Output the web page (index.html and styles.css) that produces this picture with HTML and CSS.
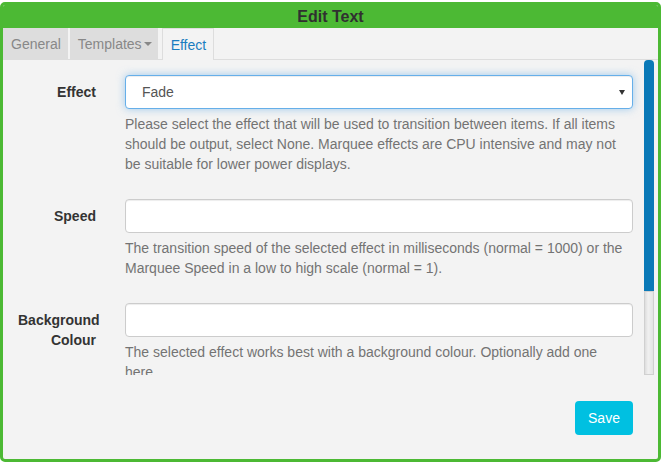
FILE: index.html
```html
<!DOCTYPE html>
<html lang="en">
<head>
    <meta charset="UTF-8">
    <meta name="viewport" content="width=device-width, initial-scale=1.0">
    <title>Edit Text</title>
    <link rel="stylesheet" href="styles.css">
</head>
<body>
    <div class="dialog">
        <div class="dialog-title">Edit Text</div>

        <ul class="tabs">
            <li class="tab">General</li>
            <li class="tab">Templates<span class="caret"></span></li>
            <li class="tab active">Effect</li>
        </ul>

        <div class="dialog-body">
            <div class="form">
                <div class="form-group">
                    <label class="form-label">Effect</label>
                    <div class="form-field">
                        <div class="select-wrap">
                            <select class="form-control focused">
                                <option>Fade</option>
                                <option>None</option>
                                <option>Marquee Left</option>
                            </select>
                        </div>
                        <p class="help-block">Please select the effect that will be used to transition between items. If all items should be output, select None. Marquee effects are CPU intensive and may not be suitable for lower power displays.</p>
                    </div>
                </div>

                <div class="form-group">
                    <label class="form-label">Speed</label>
                    <div class="form-field">
                        <input class="form-control" type="text">
                        <p class="help-block">The transition speed of the selected effect in milliseconds (normal = 1000) or the Marquee Speed in a low to high scale (normal = 1).</p>
                    </div>
                </div>

                <div class="form-group">
                    <label class="form-label">Background Colour</label>
                    <div class="form-field">
                        <input class="form-control" type="text">
                        <p class="help-block">The selected effect works best with a background colour. Optionally add one here.</p>
                    </div>
                </div>
            </div>

            <div class="scrollbar">
                <div class="scroll-thumb"></div>
                <div class="scroll-track"></div>
            </div>
        </div>

        <div class="dialog-footer">
            <button class="btn-save">Save</button>
        </div>
    </div>
</body>
</html>
```

FILE: styles.css
```css
body {
    margin: 0;
    padding-top: 2px;
    background: #fff;
    font-family: "Liberation Sans", Arial, sans-serif;
    font-size: 14px;
    color: #333;
}
.dialog {
    width: 655px;
    height: 454px;
    border: 3px solid #4cb934;
    border-radius: 5px;
    background: #f3f3f3;
    display: flex;
    flex-direction: column;
    overflow: hidden;
}
.dialog-title {
    background: #4cb934;
    height: 23px;
    line-height: 23px;
    text-align: center;
    font-size: 16px;
    font-weight: bold;
    color: #303030;
}
.tabs {
    list-style: none;
    margin: 0;
    padding: 0;
    height: 31px;
    display: flex;
    border-bottom: 1px solid #ddd;
}
.tab {
    height: 31px;
    padding: 0 7px 0 8px;
    margin-right: 2px;
    background: #ddd;
    color: #888;
    display: flex;
    align-items: center;
}
.tab:nth-child(2) {
    margin-right: 4px;
    padding-right: 6px;
}
.tab.active {
    background: #f3f3f3;
    color: #1a7dc0;
    border: 1px solid #ddd;
    border-bottom: none;
    margin-bottom: -1px;
    box-sizing: border-box;
    height: 32px;
}
.caret {
    display: inline-block;
    margin-left: 2px;
    margin-top: 1px;
    border-top: 4px solid #888;
    border-left: 4px solid transparent;
    border-right: 4px solid transparent;
}
.dialog-body {
    height: 315px;
    display: flex;
}
.form {
    flex: 1;
    overflow: hidden;
    padding: 15px 11px 0 15px;
}
.form-group {
    display: flex;
    gap: 29px;
    margin-bottom: 15px;
}
.form-label {
    width: 78px;
    flex: none;
    padding-top: 7px;
    text-align: right;
    font-weight: bold;
    line-height: 20px;
}
.form-field {
    flex: 1;
}
.form-control {
    display: block;
    width: 100%;
    height: 34px;
    box-sizing: border-box;
    padding: 6px 12px;
    font-family: inherit;
    font-size: 14px;
    color: #555;
    background: #fff;
    border: 1px solid #ccc;
    border-radius: 4px;
    box-shadow: inset 0 1px 1px rgba(0, 0, 0, 0.075);
}
.select-wrap {
    position: relative;
}
.select-wrap::after {
    content: "";
    position: absolute;
    right: 8px;
    top: 15px;
    border-top: 5px solid #333;
    border-left: 3px solid transparent;
    border-right: 3px solid transparent;
}
select.form-control {
    appearance: none;
    -webkit-appearance: none;
    padding-left: 16px;
}
.form-control.focused {
    border-color: #66afe9;
    box-shadow: inset 0 1px 1px rgba(0, 0, 0, 0.075), 0 0 8px rgba(102, 175, 233, 0.6);
    outline: none;
}
.help-block {
    margin: 5px 0 10px;
    padding-right: 8px;
    line-height: 20px;
    color: #737373;
}
.scrollbar {
    width: 10px;
    margin-right: 4px;
    display: flex;
    flex-direction: column;
}
.scroll-thumb {
    height: 231px;
    background: #0a79b7;
    border-radius: 4px 4px 0 0;
}
.scroll-track {
    flex: 1;
    background: linear-gradient(to right, #ddd, #f0f0f0 40%, #e4e4e4);
    border: 1px solid #d0d0d0;
}
.dialog-footer {
    flex: 1;
    display: flex;
    justify-content: flex-end;
    align-items: flex-start;
    padding: 26px 25px 0 0;
}
.btn-save {
    width: 58px;
    height: 34px;
    background: #00c0e1;
    border: none;
    border-radius: 4px;
    color: #fff;
    font-family: inherit;
    font-size: 14px;
    cursor: pointer;
}
```
